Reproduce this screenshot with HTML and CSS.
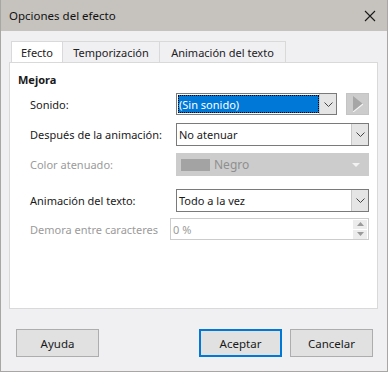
FILE: index.html
```html
<!DOCTYPE html>
<html lang="es">
<head>
    <meta charset="UTF-8">
    <title>Opciones del efecto</title>
    <link rel="stylesheet" href="styles.css">
</head>
<body>
    <div class="dialog">
        <div class="titlebar">
            <span class="title">Opciones del efecto</span>
            <svg class="close" width="12" height="12" viewBox="0 0 12 12"><path d="M1 1L11 11M11 1L1 11" stroke="#1a1a1a" stroke-width="1.1"/></svg>
        </div>
        <div class="body">
            <div class="tabs">
                <div class="tab active tab-efecto">Efecto</div>
                <div class="tab tab-tiempo">Temporización</div>
                <div class="tab tab-texto">Animación del texto</div>
            </div>
            <div class="panel">
                <div class="heading">Mejora</div>
                <div class="row row-sonido">
                    <label class="lbl">Sonido:</label>
                    <div class="combo combo-short">
                        <div class="combo-text selected"><span class="focus">(Sin sonido)</span></div>
                        <div class="drop"><svg width="9" height="5" viewBox="0 0 9 5"><path d="M0.5 0.5L4.5 4.5L8.5 0.5" fill="none" stroke="#444" stroke-width="1"/></svg></div>
                    </div>
                    <div class="play"><svg width="10" height="16" viewBox="0 0 10 16"><path d="M0 0L10 8L0 16Z" fill="#a6a6a6"/><path d="M0 16L10 8" stroke="#f4f4f4" stroke-width="1.2"/></svg></div>
                </div>
                <div class="row row-despues">
                    <label class="lbl">Después de la animación:</label>
                    <div class="combo">
                        <div class="combo-text">No atenuar</div>
                        <div class="drop"><svg width="9" height="5" viewBox="0 0 9 5"><path d="M0.5 0.5L4.5 4.5L8.5 0.5" fill="none" stroke="#444" stroke-width="1"/></svg></div>
                    </div>
                </div>
                <div class="row row-color">
                    <label class="lbl disabled">Color atenuado:</label>
                    <div class="combo combo-off">
                        <span class="swatch"></span>
                        <span class="combo-text">Negro</span>
                        <svg class="tri" width="8" height="4" viewBox="0 0 8 4"><path d="M0 0H8L4 4Z" fill="#f2f2f2"/></svg>
                    </div>
                </div>
                <div class="row row-anim">
                    <label class="lbl">Animación del texto:</label>
                    <div class="combo">
                        <div class="combo-text">Todo a la vez</div>
                        <div class="drop"><svg width="9" height="5" viewBox="0 0 9 5"><path d="M0.5 0.5L4.5 4.5L8.5 0.5" fill="none" stroke="#444" stroke-width="1"/></svg></div>
                    </div>
                </div>
                <div class="row row-demora">
                    <label class="lbl disabled lbl-demora">Demora entre caracteres</label>
                    <div class="spin">
                        <span class="spin-text">0 %</span>
                        <div class="spin-btns">
                            <div class="spin-btn"><svg width="7" height="4" viewBox="0 0 7 4"><path d="M0 4H7L3.5 0Z" fill="#9a9a9a"/></svg></div>
                            <div class="spin-btn"><svg width="7" height="4" viewBox="0 0 7 4"><path d="M0 0H7L3.5 4Z" fill="#9a9a9a"/></svg></div>
                        </div>
                    </div>
                </div>
            </div>
            <div class="buttons">
                <button class="btn">Ayuda</button>
                <div class="right">
                    <button class="btn default">Aceptar</button>
                    <button class="btn">Cancelar</button>
                </div>
            </div>
        </div>
    </div>
</body>
</html>
```

FILE: styles.css
```css
body{
    margin: 0;
    font-family: "Noto Sans", "Open Sans", sans-serif;
    font-size: 11px;
    color: #1a1a1a;
}
/* ventana completa */
.dialog{
    width: 388px;
    height: 372px;
    box-sizing: border-box;
    border: 1px solid #a9a7a4;
    border-top: none;
    background: #f0eff2;
}
.titlebar{
    height: 31px;
    background: #c6c3be;
    display: flex;
    align-items: center;
    justify-content: space-between;
    padding: 0 11px 0 8px;
}
.title{
    font-size: 11.5px;
    color: #111;
}
.body{
    padding: 10px 9px 0 8px;
}
/* pestañas */
.tabs{
    display: flex;
    padding-left: 2px;
    height: 21px;
}
.tab{
    height: 21px;
    box-sizing: border-box;
    padding-top: 3px;
    text-align: center;
    border: 1px solid #d9d9d9;
    border-bottom: none;
    border-left: none;
    background: #f0eff2;
    color: #222;
}
.tab.active{
    background: #fff;
    border-left: 1px solid #d9d9d9;
    position: relative;
    z-index: 1;
}
.tab-efecto{ width: 52px; }
.tab-tiempo{ width: 97px; }
.tab-texto{ width: 126px; }
.panel{
    height: 247px;
    box-sizing: border-box;
    background: #fff;
    border: 1px solid #d9d9d9;
    padding: 8px 0 0 8px;
}
.heading{
    font-weight: bold;
    height: 18px;
    line-height: 18px;
}
.row{
    display: flex;
    align-items: center;
}
.lbl{
    width: 146px;
    padding-left: 12px;
    color: #1a1a1a;
}
.lbl.disabled{
    color: #9b9b9b;
}
.lbl-demora{
    width: 140px;
}
.row-sonido{ margin-top: 4px; }
.row-despues{ margin-top: 8px; }
.row-color{ margin-top: 7px; }
.row-anim{ margin-top: 13px; }
.row-demora{ margin-top: 6px; }
/* combos */
.combo{
    width: 193px;
    height: 23px;
    box-sizing: border-box;
    border: 1px solid #7a7a7a;
    display: flex;
    align-items: stretch;
    background: #fff;
}
.combo-short{
    width: 161px;
    height: 22px;
}
.combo-text{
    flex: 1;
    display: flex;
    align-items: center;
    padding-left: 2px;
}
.combo-text.selected{
    background: #0078d7;
    color: #fff;
    margin: 1px 0 1px 1px;
    padding-left: 0;
}
.focus{
    display: flex;
    align-items: center;
    height: 100%;
    width: 100%;
    box-sizing: border-box;
    outline: 1px dotted #000;
    outline-offset: -1px;
    padding-left: 1px;
}
.drop{
    width: 16px;
    background: #e5e5e5;
    border-left: 1px solid #c8c8c8;
    display: flex;
    align-items: center;
    justify-content: center;
}
.play{
    width: 23px;
    height: 22px;
    margin-left: 9px;
    box-sizing: border-box;
    background: #cccccc;
    border: 1px solid #c4c4c4;
    display: flex;
    align-items: center;
    justify-content: center;
}
.combo-off{
    background: #cccccc;
    border-color: #cccccc;
    align-items: center;
    padding-left: 4px;
    padding-right: 8px;
}
.combo-off .combo-text{
    color: #8f8f8f;
    padding-left: 4px;
    font-size: 12px;
}
.swatch{
    width: 29px;
    height: 12px;
    background: #a3a3a3;
}
/* campo numérico */
.spin{
    width: 199px;
    height: 22px;
    box-sizing: border-box;
    border: 1px solid #cccccc;
    display: flex;
    align-items: center;
    justify-content: space-between;
}
.spin-text{
    color: #9b9b9b;
    padding-left: 2px;
}
.spin-btns{
    display: flex;
    flex-direction: column;
    gap: 1px;
    padding-right: 1px;
}
.spin-btn{
    width: 14px;
    height: 9px;
    background: #ececec;
    display: flex;
    align-items: center;
    justify-content: center;
}
/* botones de abajo */
.buttons{
    display: flex;
    justify-content: space-between;
    margin-top: 20px;
    padding: 0 5px 0 7px;
}
.right{
    display: flex;
    gap: 8px;
}
.btn{
    width: 83px;
    height: 28px;
    font-family: inherit;
    font-size: 11.5px;
    color: #1a1a1a;
    background: #e1e1e1;
    border: 1px solid #adadad;
    padding: 0;
}
.btn.default{
    border: 2px solid #0078d7;
}
```
